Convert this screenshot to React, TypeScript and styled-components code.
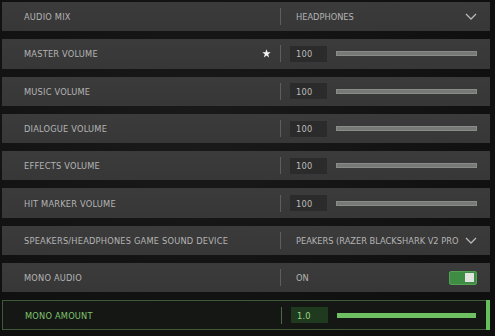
import styled, { createGlobalStyle, css } from "styled-components";

const GlobalStyle = createGlobalStyle`
  html, body {
    margin: 0;
    padding: 0;
    background: #111;
  }
  body {
    width: 495px;
    height: 336px;
    overflow: hidden;
    font-family: "DejaVu Sans Condensed", "Liberation Sans", sans-serif;
  }
`;

type Setting =
  | { kind: "select"; label: string; value: string }
  | { kind: "slider"; label: string; value: string; fill: number; starred?: boolean; active?: boolean }
  | { kind: "toggle"; label: string; value: string };

const settings: Setting[] = [
  { kind: "select", label: "AUDIO MIX", value: "HEADPHONES" },
  { kind: "slider", label: "MASTER VOLUME", value: "100", fill: 1, starred: true },
  { kind: "slider", label: "MUSIC VOLUME", value: "100", fill: 1 },
  { kind: "slider", label: "DIALOGUE VOLUME", value: "100", fill: 1 },
  { kind: "slider", label: "EFFECTS VOLUME", value: "100", fill: 1 },
  { kind: "slider", label: "HIT MARKER VOLUME", value: "100", fill: 1 },
  {
    kind: "select",
    label: "SPEAKERS/HEADPHONES GAME SOUND DEVICE",
    value: "PEAKERS (RAZER BLACKSHARK V2 PRO",
  },
  { kind: "toggle", label: "MONO AUDIO", value: "ON" },
  { kind: "slider", label: "MONO AMOUNT", value: "1.0", fill: 1, active: true },
];

function Chevron() {
  return (
    <svg width="12" height="7" viewBox="0 0 12 7">
      <path d="M1 1 L6 6 L11 1" fill="none" stroke="#b8b8b8" strokeWidth="1.3" />
    </svg>
  );
}

function Star() {
  return (
    <svg width="9" height="9" viewBox="0 0 10 10">
      <path
        d="M5 0.3 L6.2 3.6 L9.7 3.7 L6.9 5.9 L7.9 9.4 L5 7.3 L2.1 9.4 L3.1 5.9 L0.3 3.7 L3.8 3.6 Z"
        fill="#f2f2f2"
      />
    </svg>
  );
}

export default function App() {
  return (
    <>
      <GlobalStyle />
      <Page>
        {settings.map((s) => {
          const active = s.kind === "slider" && !!s.active;
          return (
            <Row key={s.label} $active={active}>
              <LabelCell>
                <Label $active={active}>{s.label}</Label>
                {s.kind === "slider" && s.starred && <Star />}
              </LabelCell>
              <Divider $active={active} />
              {s.kind === "select" && (
                <ValueCell>
                  <SelectText>{s.value}</SelectText>
                  <Chevron />
                </ValueCell>
              )}
              {s.kind === "toggle" && (
                <ValueCell>
                  <SelectText>{s.value}</SelectText>
                  <Toggle>
                    <Knob />
                  </Toggle>
                </ValueCell>
              )}
              {s.kind === "slider" && (
                <SliderCell>
                  <ValueBox $active={active}>{s.value}</ValueBox>
                  <Track>
                    <Fill $active={active} style={{ width: `${s.fill * 100}%` }} />
                  </Track>
                </SliderCell>
              )}
              {active && <FocusMark />}
            </Row>
          );
        })}
      </Page>
    </>
  );
}

const Page = styled.div`
  display: flex;
  flex-direction: column;
  gap: 8px;
  padding: 2px 5px 0 2px;
  height: 336px;
  box-sizing: border-box;
  background: radial-gradient(ellipse at 40% 40%, #1a1a1a 0%, #0f0f0f 80%);
`;

const Row = styled.div<{ $active: boolean }>`
  position: relative;
  height: 29.3px;
  box-sizing: border-box;
  display: flex;
  align-items: center;
  background: linear-gradient(180deg, #3b3b3b 0%, #373737 100%);
  flex-shrink: 0;

  ${({ $active }) =>
    $active &&
    css`
      background: #151715;
      border: 1px solid #3e5a38;
    `}
`;

const LabelCell = styled.div`
  width: 278px;
  flex-shrink: 0;
  box-sizing: border-box;
  padding: 0 9px 0 22px;
  display: flex;
  align-items: center;
  justify-content: space-between;
`;

const textStyle = css`
  font-size: 9.2px;
  letter-spacing: 0.2px;
  white-space: nowrap;
`;

const Label = styled.span<{ $active: boolean }>`
  ${textStyle};
  color: ${({ $active }) => ($active ? "#7fc46d" : "#b4b4b4")};
`;

const Divider = styled.div<{ $active: boolean }>`
  width: 1px;
  flex-shrink: 0;
  height: 17px;
  background: ${({ $active }) => ($active ? "#4c6a46" : "#5e5e5e")};
`;

const ValueCell = styled.div`
  flex: 1;
  min-width: 0;
  display: flex;
  align-items: center;
  justify-content: space-between;
  gap: 1px;
  padding: 0 13px 0 15px;
`;

const SelectText = styled.span`
  ${textStyle};
  letter-spacing: 0;
  color: #b4b4b4;
`;

const Toggle = styled.div`
  width: 28px;
  height: 14px;
  box-sizing: border-box;
  border-radius: 2px;
  background: #3f8d45;
  border: 1px solid #52a154;
  display: flex;
  align-items: center;
  justify-content: flex-end;
  padding-right: 2px;
`;

const Knob = styled.div`
  width: 9px;
  height: 9px;
  background: #e2e4e2;
`;

const SliderCell = styled.div`
  flex: 1;
  display: flex;
  align-items: center;
  gap: 9px;
  padding: 0 13px 0 9px;
`;

const ValueBox = styled.div<{ $active: boolean }>`
  width: 37px;
  height: 16px;
  box-sizing: border-box;
  padding-left: 6px;
  display: flex;
  align-items: center;
  ${textStyle};
  background: ${({ $active }) => ($active ? "#1f3a1e" : "#2b2b2b")};
  color: ${({ $active }) => ($active ? "#9ad889" : "#bdbdbd")};
`;

const Track = styled.div`
  flex: 1;
  height: 5px;
  background: #2a2a2a;
`;

const Fill = styled.div<{ $active: boolean }>`
  height: 100%;
  box-sizing: border-box;
  background: ${({ $active }) => ($active ? "#6fc062" : "#777977")};
  border: ${({ $active }) => ($active ? "none" : "1px solid #8a8c8a")};
`;

const FocusMark = styled.div`
  position: absolute;
  right: -1px;
  top: -1px;
  bottom: -1px;
  width: 4px;
  background: #66c05a;
`;
